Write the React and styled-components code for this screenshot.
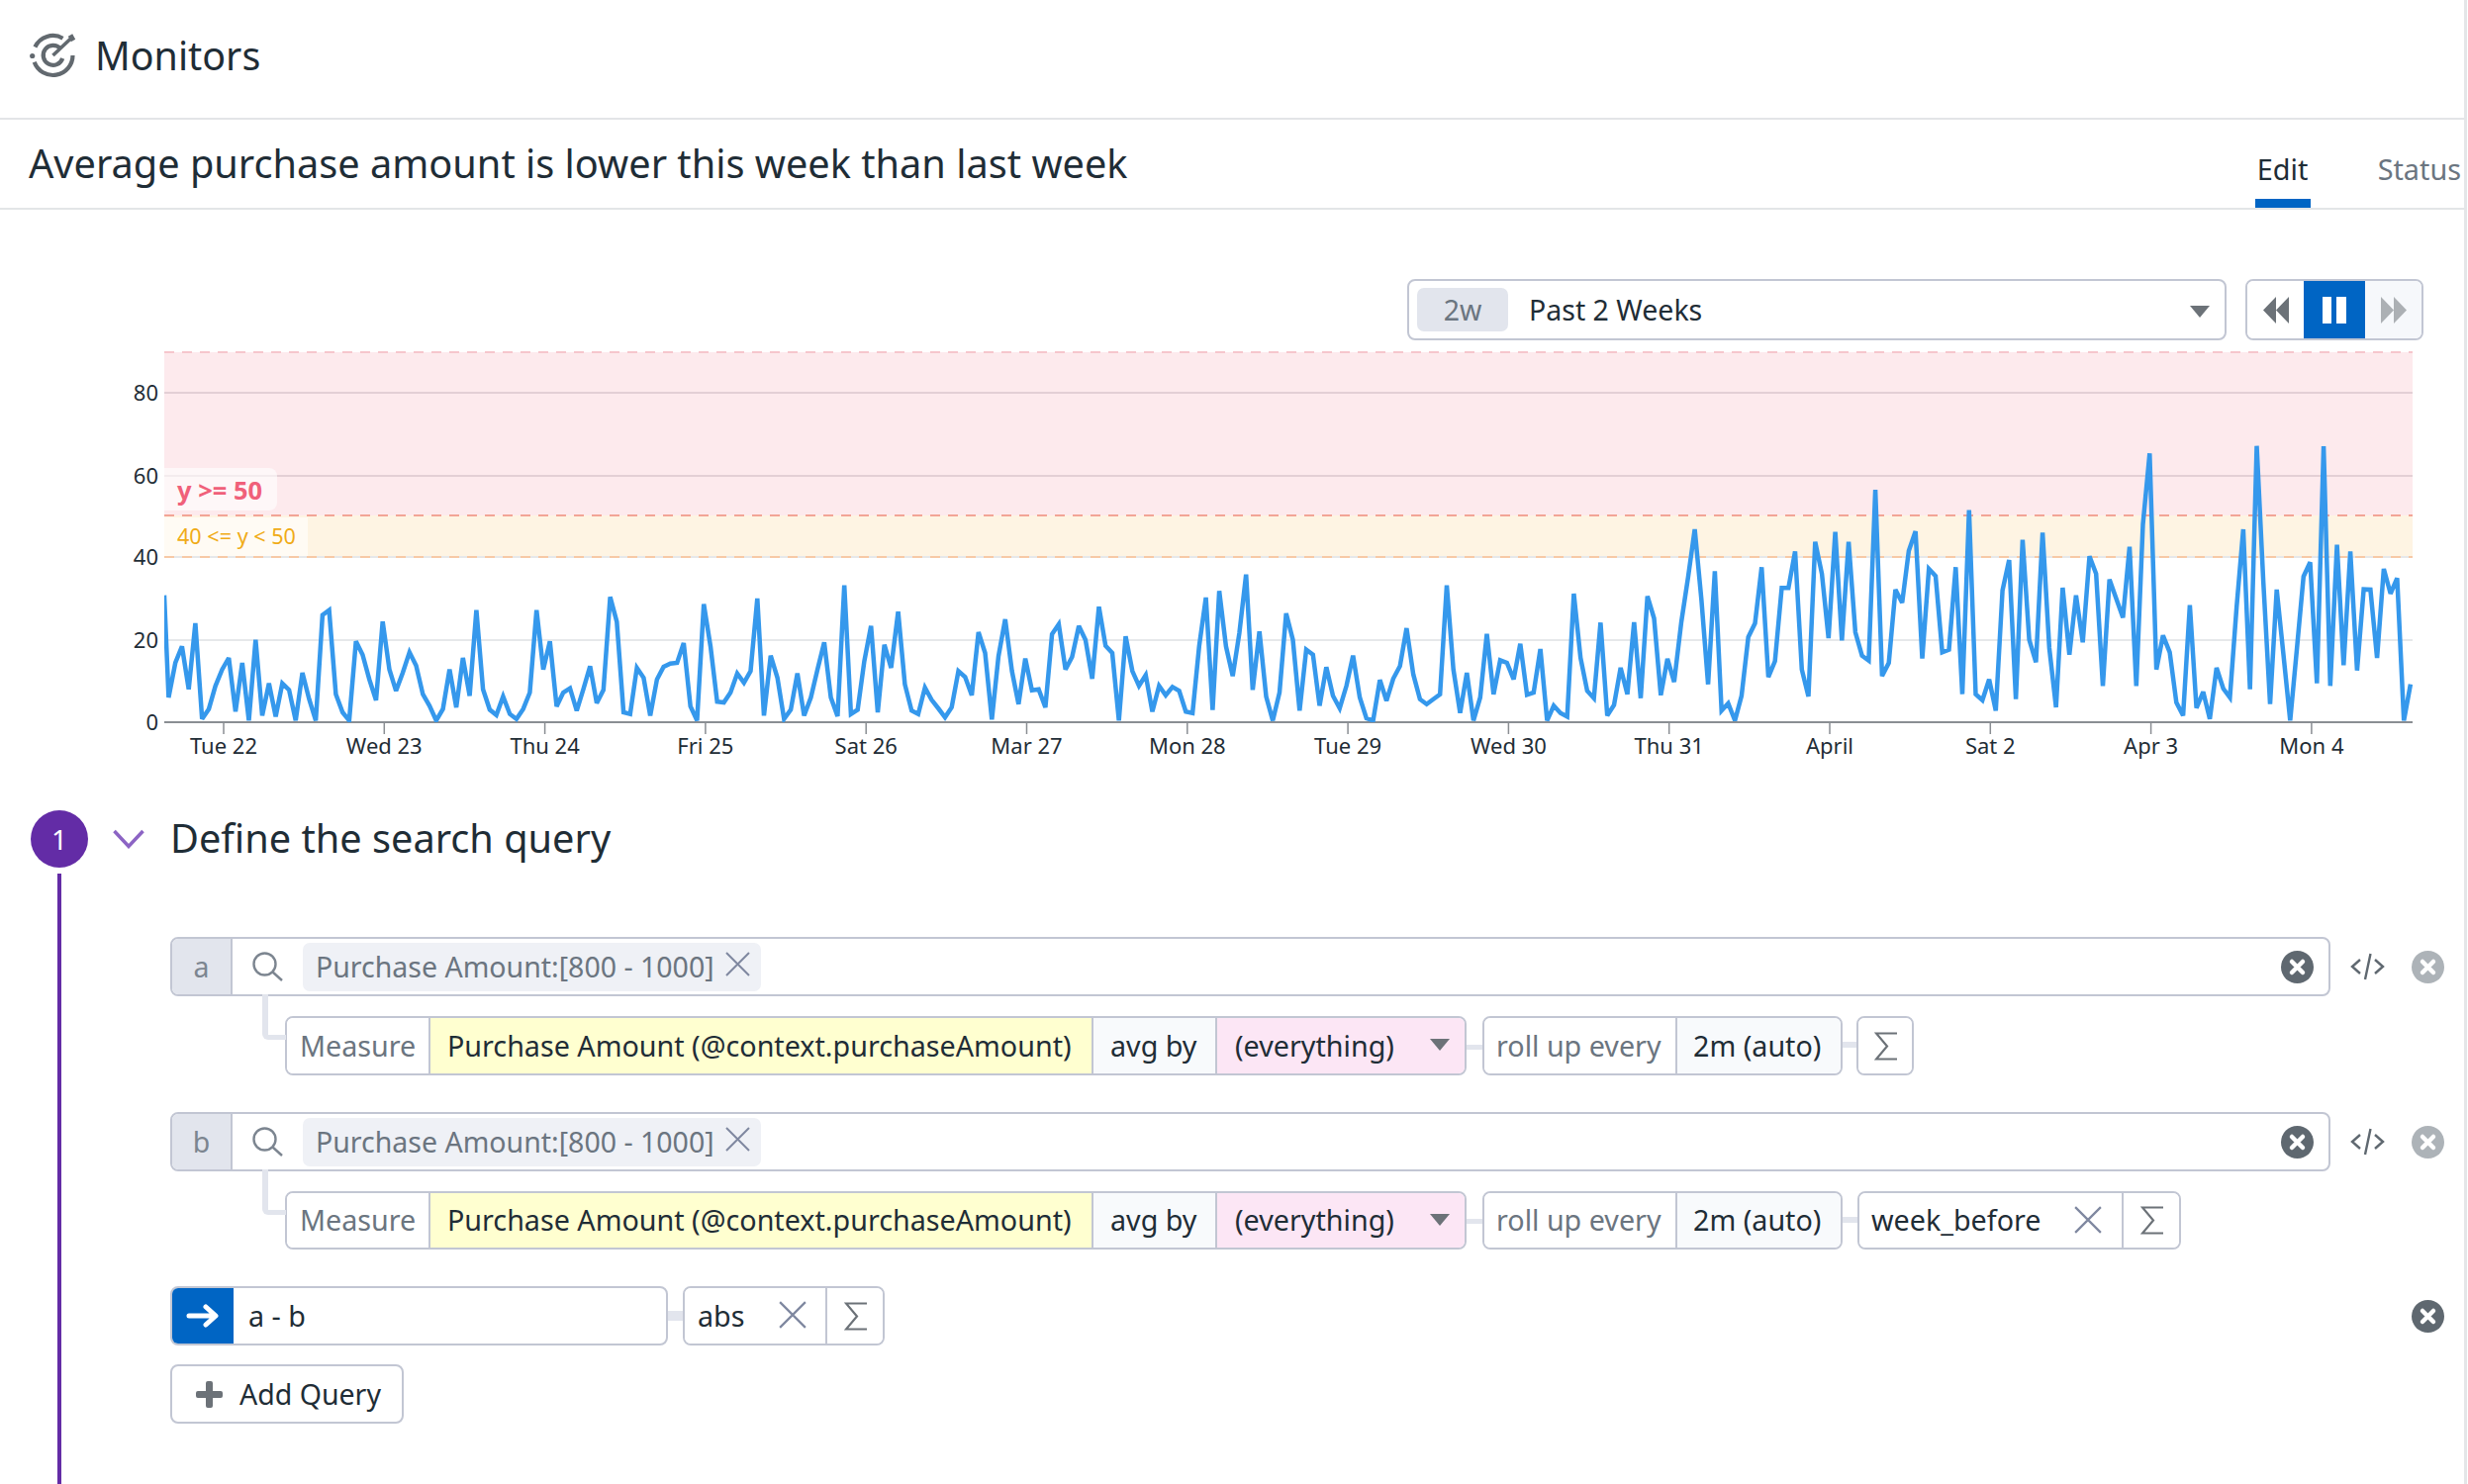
import React from 'react';
import styled, { createGlobalStyle } from 'styled-components';

const GlobalStyle = createGlobalStyle`
    * { box-sizing: border-box; }
    html, body { margin: 0; padding: 0; background: #fff; }
    body { font-family: "Noto Sans", "Open Sans", sans-serif; color: #1f2d36; }
`;

const BORDER = '#c2c6d3';
const DARK = '#1f2d36';
const GRAY = '#6b7580';

const Page = styled.div`
    width: 2493px;
    height: 1500px;
    border-right: 3px solid #e4e6e8;
    display: flex;
    flex-direction: column;
    overflow: hidden;
`;

const Header = styled.header`
    height: 121px;
    display: flex;
    align-items: center;
    gap: 6px;
    padding: 0 0 8px 20px;
    border-bottom: 2px solid #e3e5e7;
    font-size: 39.4px;
`;

const TitleBar = styled.div`
    height: 91px;
    display: flex;
    justify-content: space-between;
    align-items: center;
    padding: 0 3px 0 29px;
    border-bottom: 2px solid #e3e5e7;
`;

const Title = styled.h1`
    margin: 0;
    padding-bottom: 2px;
    font-size: 39.7px;
    font-weight: 400;
`;

const Tabs = styled.div`
    align-self: stretch;
    display: flex;
    gap: 68px;
`;

const Tab = styled.div`
    min-width: 56px;
    text-align: center;
    padding-top: 20px;
    font-size: 28.8px;
    line-height: 60px;
    color: ${(p) => (p.$active ? DARK : GRAY)};
    border-bottom: 9px solid ${(p) => (p.$active ? '#0065c4' : 'transparent')};
`;

const Toolbar = styled.div`
    display: flex;
    justify-content: flex-end;
    gap: 19px;
    margin-top: 70px;
    padding-right: 41px;
`;

const TimeSelect = styled.div`
    width: 828px;
    height: 62px;
    display: flex;
    align-items: center;
    padding: 0 15px 0 8px;
    border: 2px solid ${BORDER};
    border-radius: 8px;
    font-size: 28.5px;
`;

const TimeChip = styled.span`
    width: 92px;
    height: 44px;
    display: flex;
    align-items: center;
    justify-content: center;
    margin-right: 21px;
    border-radius: 7px;
    background: #e2e5ed;
    color: ${GRAY};
`;

const Caret = styled.span`
    margin: ${(p) => p.$mt || 0}px 0 0 auto;
    width: 0;
    height: 0;
    border-left: 10px solid transparent;
    border-right: 10px solid transparent;
    border-top: 12px solid #6c7278;
`;

const Transport = styled.div`
    width: 180px;
    height: 62px;
    display: flex;
    border: 2px solid ${BORDER};
    border-radius: 8px;
    overflow: hidden;
`;

const TransportCell = styled.div`
    flex: ${(p) => (p.$active ? '0 0 62px' : '1')};
    margin: ${(p) => (p.$active ? '-2px 0' : '0')};
    display: flex;
    align-items: center;
    justify-content: center;
    background: ${(p) => (p.$active ? '#0065c4' : p.$muted ? '#f6f8fb' : '#fff')};
`;

const ChartSvg = styled.svg`
    display: block;
    width: 2490px;
    height: 450px;
    margin-top: 6px;
    flex: none;
`;

const AxisText = styled.text`
    font-size: 22px;
    fill: #1f2d36;
`;

const AlertLabel = styled.text`
    font-size: 25.5px;
    font-weight: 700;
    fill: #f0607a;
`;

const WarnLabel = styled.text`
    font-size: 21.6px;
    fill: #f0ab17;
`;

const StepHeader = styled.div`
    display: flex;
    align-items: center;
    height: 58px;
    margin-top: 19px;
    padding-left: 31px;
`;

const StepNumber = styled.div`
    width: 58px;
    height: 58px;
    display: flex;
    align-items: center;
    justify-content: center;
    border-radius: 50%;
    background: #632ca6;
    color: #fff;
    font-size: 28px;
`;

const StepTitle = styled.h2`
    margin: 0 0 0 26px;
    padding-bottom: 2px;
    font-size: 39.7px;
    font-weight: 400;
`;

const StepBody = styled.div`
    flex: 1;
    margin: 6px 0 0 58px;
    padding: 64px 0 0 110px;
    border-left: 4px solid #632ca6;
`;

const Content = styled.div`
    width: 2298px;
    display: flex;
    flex-direction: column;
`;

const QueryRow = styled.div`
    display: flex;
    align-items: center;
    margin-top: ${(p) => p.$mt || 0}px;
`;

const SearchBox = styled.div`
    position: relative;
    width: 2183px;
    height: 60px;
    display: flex;
    align-items: center;
    border: 2px solid ${BORDER};
    border-radius: 8px;
    font-size: 28.5px;
`;

const Letter = styled.div`
    width: 61px;
    align-self: stretch;
    display: flex;
    align-items: center;
    justify-content: center;
    background: #e2e5ed;
    border-right: 2px solid ${BORDER};
    border-radius: 6px 0 0 6px;
    color: #7c8590;
`;

const SearchChip = styled.div`
    height: 49px;
    width: 463px;
    display: flex;
    align-items: center;
    justify-content: space-between;
    margin-left: 20px;
    padding: 0 11px 0 13px;
    background: #eff1f6;
    border-radius: 7px;
    color: ${GRAY};
    svg {
        margin-bottom: 5px;
    }
`;

const ClearSlot = styled.div`
    margin-left: auto;
    margin-right: 15px;
    display: flex;
`;

const CodeSlot = styled.div`
    margin-left: 20px;
    display: flex;
`;

const RemoveSlot = styled.div`
    margin-left: ${(p) => p.$ml || 27}px;
    display: flex;
`;

const Elbow = styled.span`
    position: absolute;
    left: 91px;
    top: 100%;
    width: 24px;
    height: 46px;
    border-left: 6px solid #e2e5ed;
    border-bottom: 5px solid #e2e5ed;
    border-bottom-left-radius: 6px;
`;

const SubRow = styled.div`
    display: flex;
    align-items: center;
    height: ${(p) => p.$h || 60}px;
    margin: 20px 0 0 116px;
`;

const Group = styled.div`
    flex: none;
    height: 100%;
    display: flex;
    border: 2px solid ${BORDER};
    border-radius: 8px;
    overflow: hidden;
    font-size: 28.7px;
`;

const Cell = styled.div`
    width: ${(p) => p.$w}px;
    display: flex;
    align-items: center;
    padding: ${(p) => (p.$center ? '0' : `0 ${p.$pr || p.$pad || 16}px 2px ${p.$pad || 16}px`)};
    justify-content: ${(p) => (p.$center ? 'center' : 'space-between')};
    background: ${(p) => p.$bg || '#fff'};
    color: ${(p) => (p.$muted ? GRAY : DARK)};
    white-space: nowrap;
    & + & {
        border-left: 2px solid ${BORDER};
    }
`;

const Link = styled.span`
    flex: none;
    width: ${(p) => p.$w || 16}px;
    height: ${(p) => p.$h || 5}px;
    background: #e2e5ed;
    margin-top: ${(p) => p.$mt || 0}px;
`;

const FormulaBox = styled.div`
    flex: none;
    width: 503px;
    height: 100%;
    display: flex;
    align-items: center;
    border: 2px solid ${BORDER};
    border-radius: 8px;
    overflow: hidden;
    font-size: 28.7px;
`;

const ArrowCell = styled.div`
    width: 64px;
    align-self: stretch;
    margin: -2px 0 -2px -2px;
    display: flex;
    align-items: center;
    justify-content: center;
    background: #0065c4;
`;

const FormulaText = styled.span`
    margin-left: 15px;
    padding-bottom: 2px;
`;

const FormulaRow = styled(QueryRow)`
    height: 60px;
`;

const AddButton = styled.button`
    width: 236px;
    height: 60px;
    margin-top: 19px;
    display: flex;
    align-items: center;
    gap: 17px;
    padding: 0 0 0 24px;
    background: #fff;
    border: 2px solid ${BORDER};
    border-radius: 8px;
    font-family: inherit;
    font-size: 28.5px;
    color: ${DARK};
`;

// values are read off the screenshot, as y positions inside 3x crops (page y = 340 + v / 3)
const seriesA = [1095, 990, 940, 1070, 870, 1160, 1130, 1060, 1010, 975, 1138, 990, 1165, 920, 1150, 1052, 1153, 1052, 1072, 1165, 1020, 1100, 1165, 845, 830, 1085, 1140, 1165, 925, 965, 1040, 1103, 865, 1010, 1075, 1020, 958, 998, 1085, 1120, 1165, 1130, 1010, 1125, 975, 1090, 830, 1070, 1132, 1148, 1092, 1145, 1160, 1130, 1080, 830, 1010, 925, 1122, 1080, 1067, 1135, 1070, 1000, 1112, 1072, 790, 865, 1140, 1145, 1005, 1035, 1150, 1040, 1002, 992, 990, 930, 1122, 1165, 812, 940, 1108, 1110, 1080, 1022, 1050, 1015, 795, 1150, 968, 1035, 1160, 1132, 1022, 1150, 1095, 1010, 928, 1095, 1152, 755, 1145, 1132, 985, 878, 1140, 935, 1005];
const seriesB = [835, 1055, 1135, 1145, 1065, 1102, 1128, 1155, 1125, 1015, 1033, 1088, 897, 960, 1162, 970, 858, 1015, 1115, 977, 1073, 1070, 1125, 903, 873, 1010, 972, 878, 920, 1038, 820, 938, 960, 1165, 910, 1015, 1060, 1027, 1138, 1060, 1088, 1063, 1075, 1138, 1142, 940, 792, 1133, 772, 940, 1030, 900, 722, 1072, 895, 1092, 1165, 1080, 840, 920, 1135, 950, 965, 1120, 1003, 1090, 1128, 1060, 968, 1095, 1158, 1165, 1042, 1105, 1038, 1000, 885, 1025, 1100, 1115, 1100, 1085, 755, 1010, 1142, 1020, 1165, 1095, 902, 1085, 982, 990, 1040, 932, 1087, 1080, 948, 1165, 1120, 1142, 1153, 780, 975, 1075, 1097, 868, 1150, 1118, 1005, 1085, 867, 1097, 788, 855, 1088, 978, 1048];
const seriesC = [865, 730, 585, 800, 1055, 712, 1135, 1113, 1165, 1090, 912, 870, 700, 1033, 985, 763, 763, 652, 1010, 1092, 623, 720, 915, 593, 922, 623, 897, 968, 983, 465, 1030, 990, 768, 808, 650, 591, 977, 705, 727, 958, 950, 700, 1085, 527, 1085, 1103, 1040, 1135, 770, 678, 1100, 617, 920, 988, 595, 945, 1125, 762, 965, 785, 928, 667, 720, 1060, 737, 795, 853, 638, 1060, 570, 355, 1010, 907, 958, 1110, 1150, 815, 1127, 1078, 1160, 1005, 1068, 1095, 820, 585, 1070, 332, 745, 1115, 768, 965, 1165, 950, 728, 685, 1052, 333, 1060, 632, 997, 652, 1013, 767, 768, 975, 705, 780, 733, 1165, 1055];

const STEP = 6.76;
const toPoints = (values, startX) =>
    values.map((v, i) => `${(startX + i * STEP).toFixed(1)},${(340 + v / 3).toFixed(1)}`);

const linePoints = [
    `166,${(340 + 785 / 3).toFixed(1)}`,
    ...toPoints(seriesA, 170.4),
    ...toPoints(seriesB, 907.65),
    ...toPoints(seriesC, 1699.1),
].join(' ');

const dayLabels = ['Tue 22', 'Wed 23', 'Thu 24', 'Fri 25', 'Sat 26', 'Mar 27', 'Mon 28', 'Tue 29', 'Wed 30', 'Thu 31', 'April', 'Sat 2', 'Apr 3', 'Mon 4'];
const yTicks = [
    { label: '80', y: 397, color: '#e3cfd5' },
    { label: '60', y: 481, color: '#e3cfd5' },
    { label: '40', y: 563, color: '#e6e8ea' },
    { label: '20', y: 647, color: '#e6e8ea' },
    { label: '0', y: 730, color: '#8a8e93' },
];

const Chart = () => (
    <ChartSvg viewBox="0 350 2490 450">
        <defs>
            <clipPath id="plot">
                <rect x="166" y="350" width="2272" height="380" />
            </clipPath>
        </defs>
        <rect x="166" y="356" width="2272" height="165" fill="#fdeaed" />
        <rect x="166" y="521" width="2272" height="42" fill="#fef4e3" />
        {yTicks.map((t) => (
            <g key={t.label}>
                <line x1="166" x2="2438" y1={t.y} y2={t.y} stroke={t.color} strokeWidth="2" />
                <AxisText x="160" y={t.y + 8} textAnchor="end">{t.label}</AxisText>
            </g>
        ))}
        <line x1="166" x2="2438" y1="356" y2="356" stroke="#f6c6cd" strokeWidth="2" strokeDasharray="10 8" />
        <line x1="166" x2="2438" y1="521" y2="521" stroke="#f2a496" strokeWidth="2" strokeDasharray="10 8" />
        <line x1="166" x2="2438" y1="563" y2="563" stroke="#f7c9a6" strokeWidth="2" strokeDasharray="10 8" />
        {dayLabels.map((label, i) => {
            const x = 226 + 162.3 * i;
            return (
                <g key={label}>
                    <line x1={x} x2={x} y1="730" y2="742" stroke="#8a8e93" strokeWidth="1.5" />
                    <AxisText x={x} y="762" textAnchor="middle">{label}</AxisText>
                </g>
            );
        })}
        <path d="M166 473h106a8 8 0 0 1 8 8v27a8 8 0 0 1-8 8H166z" fill="#fff" fillOpacity="0.6" />
        <path d="M166 523h145v39H166z" fill="#fff" fillOpacity="0.6" />
        <AlertLabel x="179" y="505">y &gt;= 50</AlertLabel>
        <WarnLabel x="179" y="550">40 &lt;= y &lt; 50</WarnLabel>
        <polyline clipPath="url(#plot)" points={linePoints} fill="none" stroke="#3598ec" strokeWidth="4.5" strokeLinejoin="miter" strokeMiterlimit="3" />
    </ChartSvg>
);

const MonitorIcon = () => (
    <svg width="70" height="60" viewBox="0 0 70 60" fill="none" stroke="#62696f" strokeWidth="4.2">
        <path d="M15.4 21.5A20 20 0 0 1 43.5 12.7" />
        <path d="M14.7 36.8A20 20 0 0 0 53.5 30" />
        <path d="M41 23A10 10 0 1 0 43.2 33" />
        <path d="M33.5 30L52 12.5" strokeWidth="3.6" />
        <path d="M51 9.5L54 15" strokeWidth="5" />
        <circle cx="12.7" cy="30.5" r="2.6" fill="#62696f" stroke="none" />
    </svg>
);

const Chevron = () => (
    <svg width="32" height="20" viewBox="0 0 32 20" fill="none" stroke="#8c64c4" strokeWidth="3.5" style={{ marginLeft: 25 }}>
        <path d="M1.5 2L16 17.5L30.5 2" />
    </svg>
);

const SearchIcon = () => (
    <svg width="32" height="32" viewBox="0 0 32 32" fill="none" stroke="#7c8590" strokeWidth="2.4" style={{ marginLeft: 19 }}>
        <circle cx="13.5" cy="13.5" r="11" />
        <path d="M21.5 21.5L31 30" />
    </svg>
);

const CrossIcon = ({ size = 25, color = '#7f88a0' }) => (
    <svg width={size} height={size} viewBox="0 0 25 25" fill="none" stroke={color} strokeWidth="2">
        <path d="M1 1L24 24M24 1L1 24" />
    </svg>
);

const SigmaIcon = () => (
    <svg width="23" height="29" viewBox="0 0 23 29" fill="none" stroke="#6c7278" strokeWidth="2.2">
        <path d="M23 1.5H2L13 14.5L2 27.5H23" />
    </svg>
);

const CircleX = ({ color = '#5f6870' }) => (
    <svg width="33" height="33" viewBox="0 0 33 33">
        <circle cx="16.5" cy="16.5" r="16.5" fill={color} />
        <path d="M11 11L22 22M22 11L11 22" stroke="#fff" strokeWidth="4.5" strokeLinecap="round" />
    </svg>
);

const CodeIcon = () => (
    <svg width="35" height="28" viewBox="0 0 35 28" fill="none" stroke="#5f6870" strokeWidth="2.4">
        <path d="M10 7L2 14L10 21M25 7L33 14L25 21M20.5 1L15 27" />
    </svg>
);

const Query = ({ letter, mt }) => (
    <QueryRow $mt={mt}>
        <SearchBox>
            <Letter>{letter}</Letter>
            <SearchIcon />
            <SearchChip>
                Purchase Amount:[800 - 1000]
                <CrossIcon />
            </SearchChip>
            <ClearSlot><CircleX /></ClearSlot>
            <Elbow />
        </SearchBox>
        <CodeSlot><CodeIcon /></CodeSlot>
        <RemoveSlot><CircleX color="#adb3b8" /></RemoveSlot>
    </QueryRow>
);

const Measure = () => (
    <>
        <Group>
            <Cell $muted $pad={13} $w={143}>Measure</Cell>
            <Cell $bg="#ffffd0" $w={670} $pad={17}>Purchase Amount (@context.purchaseAmount)</Cell>
            <Cell $bg="#f8fafc" $w={125} $pad={17}>avg by</Cell>
            <Cell $bg="#fce6f5" $w={252} $pad={18} $pr={15}>
                (everything)
                <Caret />
            </Cell>
        </Group>
        <Link $mt={2} />
        <Group>
            <Cell $muted $pad={12} $w={193}>roll up every</Cell>
            <Cell $bg="#f8fafc" $w={167}>2m (auto)</Cell>
        </Group>
    </>
);

export default function App() {
    return (
        <Page>
            <GlobalStyle />
            <Header>
                <MonitorIcon />
                Monitors
            </Header>
            <TitleBar>
                <Title>Average purchase amount is lower this week than last week</Title>
                <Tabs>
                    <Tab $active>Edit</Tab>
                    <Tab>Status</Tab>
                </Tabs>
            </TitleBar>
            <Toolbar>
                <TimeSelect>
                    <TimeChip>2w</TimeChip>
                    Past 2 Weeks
                    <Caret $mt={3} />
                </TimeSelect>
                <Transport>
                    <TransportCell>
                        <svg width="26" height="27" viewBox="0 0 26 27" fill="#6c7278"><path d="M0 13.5L13 0V27zM13 13.5L26 0V27z" /></svg>
                    </TransportCell>
                    <TransportCell $active>
                        <svg width="24" height="27" viewBox="0 0 24 27" fill="#fff"><path d="M0 0H9V27H0zM14 0H24V27H14z" /></svg>
                    </TransportCell>
                    <TransportCell $muted>
                        <svg width="26" height="27" viewBox="0 0 26 27" fill="#acb0b4"><path d="M13 13.5L0 0V27zM26 13.5L13 0V27z" /></svg>
                    </TransportCell>
                </Transport>
            </Toolbar>
            <Chart />
            <StepHeader>
                <StepNumber>1</StepNumber>
                <Chevron />
                <StepTitle>Define the search query</StepTitle>
            </StepHeader>
            <StepBody>
                <Content>
                    <Query letter="a" />
                    <SubRow>
                        <Measure />
                        <Link $w={14} $h={6} $mt={-2} />
                        <Group>
                            <Cell $center $w={54}><SigmaIcon /></Cell>
                        </Group>
                    </SubRow>
                    <Query letter="b" mt={37} />
                    <SubRow $h={59}>
                        <Measure />
                        <Link $w={15} $h={6} $mt={-2} />
                        <Group>
                            <Cell $w={265} $pad={12} $pr={20}>
                                week_before
                                <CrossIcon size={28} />
                            </Cell>
                            <Cell $center $w={58}><SigmaIcon /></Cell>
                        </Group>
                    </SubRow>
                    <FormulaRow $mt={37}>
                        <FormulaBox>
                            <ArrowCell>
                                <svg width="33" height="24" viewBox="0 0 33 24" fill="none" stroke="#fff" strokeWidth="5" strokeLinecap="round" strokeLinejoin="round">
                                    <path d="M3 12H29M20 3L30 12L20 21" />
                                </svg>
                            </ArrowCell>
                            <FormulaText>a - b</FormulaText>
                        </FormulaBox>
                        <Link $w={15} $h={10} />
                        <Group>
                            <Cell $pad={13} $pr={19} $w={142}>
                                abs
                                <CrossIcon size={28} />
                            </Cell>
                            <Cell $center $w={58}><SigmaIcon /></Cell>
                        </Group>
                        <RemoveSlot $ml={1543}><CircleX /></RemoveSlot>
                    </FormulaRow>
                    <AddButton>
                        <svg width="27" height="27" viewBox="0 0 27 27" fill="#6c7278"><path d="M10 2a2 2 0 0 1 2-2h3a2 2 0 0 1 2 2v8h8a2 2 0 0 1 2 2v3a2 2 0 0 1-2 2h-8v8a2 2 0 0 1-2 2h-3a2 2 0 0 1-2-2v-8H2a2 2 0 0 1-2-2v-3a2 2 0 0 1 2-2h8z" /></svg>
                        Add Query
                    </AddButton>
                </Content>
            </StepBody>
        </Page>
    );
}
